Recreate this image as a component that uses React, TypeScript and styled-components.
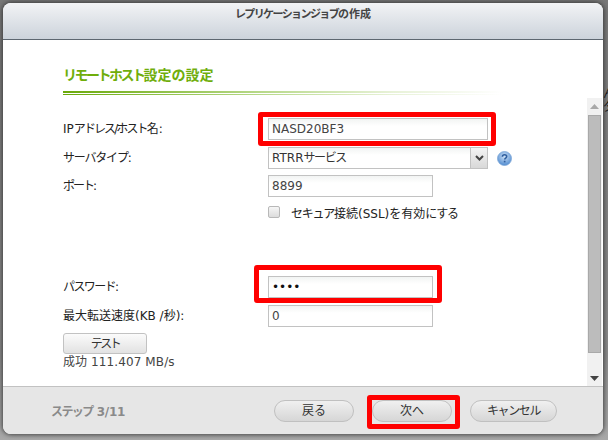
import React from "react";
import styled, { createGlobalStyle } from "styled-components";

const Global = createGlobalStyle`
  html, body { margin: 0; padding: 0; background: #7a7a7a; }
  * { box-sizing: border-box; }
`;

const font = `"DejaVu Sans", "Noto Sans CJK JP", sans-serif`;

const Page = styled.div`
  position: relative;
  width: 608px;
  height: 440px;
  overflow: hidden;
  padding: 3px 0 0 3px;
  font: 12px ${font};
  color: #222;
  background: linear-gradient(#777, #8a8a8a 80%, #a8a8a8);
`;

const BehindText = styled.div`
  position: absolute;
  left: 603px;
  top: 88px;
  font-size: 12px;
  line-height: 13px;
  color: #111;
  white-space: nowrap;
`;

const Kana = styled.span<{ $ls: number }>`
  letter-spacing: ${(p) => p.$ls}px;
`;

const Dialog = styled.div`
  position: relative;
  width: 600px;
  height: 431px;
  display: flex;
  flex-direction: column;
  border-radius: 8px;
  overflow: hidden;
  background: #fff;
  box-shadow: 0 0 4px 1px rgba(40, 40, 40, 0.75);
`;

const Header = styled.header`
  height: 37px;
  flex: none;
  display: flex;
  align-items: flex-start;
  justify-content: center;
  padding-top: 3px;
  background: linear-gradient(#f2f3f5, #ccd3db);
  border-bottom: 1px solid #5d6770;
  font-size: 11px;
  line-height: 18px;
  font-weight: 700;
  color: #444;
`;

const Body = styled.div`
  flex: 1;
  display: flex;
  min-height: 0;
  background: #fff;
`;

const Form = styled.div`
  flex: 1;
  padding: 27px 0 0 60px;
`;

const Title = styled.h2`
  margin: 0;
  height: 24px;
  font-size: 14px;
  line-height: 16px;
  font-weight: 700;
  color: #6fae0b;
`;

const Rule = styled.div`
  width: 440px;
  height: 4px;
  margin-bottom: 23px;
  background:
    linear-gradient(#fff, #fff) 0 2px / 100% 1px no-repeat,
    linear-gradient(90deg, #6aa90a, #b8d98a 45%, #e8f2d8 75%, #fff);
`;

const Row = styled.div<{ $gap?: number }>`
  display: flex;
  align-items: center;
  height: 22px;
  margin-top: ${(p) => p.$gap ?? 0}px;
`;

const Label = styled.label`
  width: 205px;
  flex: none;
  line-height: 16px;
`;

const TextBox = styled.div<{ $wide?: boolean; $dark?: boolean }>`
  width: ${(p) => (p.$wide ? 220 : 165)}px;
  height: 22px;
  padding-left: 3px;
  border: 1px solid #c2c2c2;
  background: linear-gradient(#f2f4f3, #fff 35%);
  line-height: 20px;
  color: ${(p) => (p.$dark ? "#111" : "#444")};
`;

const SelectBox = styled.div`
  width: 220px;
  height: 22px;
  display: flex;
  border: 1px solid #c2c2c2;
  background: linear-gradient(#f2f4f3, #fff 35%);
  line-height: 20px;
  color: #333;
`;

const SelectText = styled.span`
  flex: 1;
  padding-left: 3px;
`;

const SelectArrow = styled.span`
  width: 17px;
  display: flex;
  align-items: center;
  justify-content: center;
  border-left: 1px solid #c2c2c2;
  background: linear-gradient(#f4f4f4, #d8d8d8);
`;

const HelpWrap = styled.span`
  display: flex;
  margin-left: 9px;
`;

const CheckRow = styled.div`
  display: flex;
  align-items: center;
  height: 16px;
  margin: 7px 0 0 205px;
`;

const CheckBox = styled.span`
  width: 12px;
  height: 12px;
  flex: none;
  margin-right: 11px;
  border: 1px solid #b8b8b8;
  border-radius: 2px;
  background: linear-gradient(#f6f6f6, #dcdcdc);
`;

const TestButton = styled.div`
  width: 84px;
  height: 21px;
  margin-top: 6px;
  border: 1px solid #c2c2c2;
  border-radius: 3px;
  background: linear-gradient(#fbfbfb, #e2e2e2);
  text-align: center;
  line-height: 20px;
  color: #333;
`;

const Result = styled.div`
  line-height: 17px;
  color: #444;
  letter-spacing: 0.1px;
`;

const Scrollbar = styled.div`
  width: 15px;
  flex: none;
  margin: 58px 1px 0 0;
  padding: 0 1px;
  display: flex;
  flex-direction: column;
  align-items: stretch;
  background: #f1f1f1;
`;

const ScrollArrow = styled.div<{ $h: number }>`
  height: ${(p) => p.$h}px;
  display: flex;
  align-items: center;
  justify-content: center;
`;

const ScrollThumb = styled.div`
  height: 238px;
  background: #bcbcbc;
  border: 1px solid #a9a9a9;
`;

const ScrollSpacer = styled.div`
  flex: 1;
`;

const Footer = styled.footer`
  height: 48px;
  flex: none;
  display: flex;
  align-items: center;
  padding: 0 46px 0 48px;
  border-top: 1px solid #c2c2c2;
  background: #e6e6e6;
`;

const Step = styled.span`
  flex: 1;
  font-weight: 700;
  font-size: 12px;
  color: #8a8a8a;
`;

const Pill = styled.div<{ $w: number; $ml?: number }>`
  width: ${(p) => p.$w}px;
  height: 22px;
  margin-left: ${(p) => p.$ml ?? 0}px;
  border: 1px solid #c0c0c0;
  border-radius: 11px;
  background: linear-gradient(#f0f0f0, #d6d6d6);
  text-align: center;
  line-height: 20px;
  color: #333;
`;

const Highlight = styled.div<{ $x: number; $y: number; $w: number; $h: number }>`
  position: absolute;
  left: ${(p) => p.$x}px;
  top: ${(p) => p.$y}px;
  width: ${(p) => p.$w}px;
  height: ${(p) => p.$h}px;
  border: 5px solid #ff0000;
  border-radius: 3px;
`;

const Help = () => (
  <svg width="15" height="15" viewBox="0 0 15 15">
    <defs>
      <radialGradient id="h" cx="50%" cy="35%" r="65%">
        <stop offset="0" stopColor="#cfe2f6" />
        <stop offset="1" stopColor="#4f8ad0" />
      </radialGradient>
    </defs>
    <circle cx="7.5" cy="7.5" r="7" fill="url(#h)" stroke="#7fa8d8" strokeWidth="0.8" />
    <path d="M5.4 5.8c0-1.4 1-2 2.2-2s2.1.7 2.1 1.8c0 1.5-2 1.5-2 3" fill="none" stroke="#2f5f9f" strokeWidth="1.6" />
    <rect x="6.8" y="9.7" width="1.7" height="1.7" fill="#2f5f9f" />
  </svg>
);

const Chevron = () => (
  <svg width="9" height="6" viewBox="0 0 9 6">
    <path d="M1 1l3.5 3.5L8 1" fill="none" stroke="#444" strokeWidth="2" />
  </svg>
);

const Tri = ({ up, color }: { up?: boolean; color: string }) => (
  <svg width="9" height="5" viewBox="0 0 9 5">
    <path d={up ? "M4.5 0L9 5H0z" : "M0 0h9L4.5 5z"} fill={color} />
  </svg>
);

export default function App() {
  return (
    <Page>
      <Global />
      <BehindText>
        ん
        <br />
        ダ
      </BehindText>
      <Dialog>
        <Header>
          <span>
            <Kana $ls={-1.6}>レプリケーションジョブ</Kana>の作成
          </span>
        </Header>
        <Body>
          <Form>
            <Title>
              <Kana $ls={-2.5}>リモートホスト</Kana>設定の設定
            </Title>
            <Rule />
            <Row>
              <Label>
                IP<Kana $ls={-1.9}>アドレス/ホスト</Kana>名:
              </Label>
              <TextBox $wide>NASD20BF3</TextBox>
            </Row>
            <Row $gap={7}>
              <Label>
                <Kana $ls={-1.2}>サーバタイプ</Kana>:
              </Label>
              <SelectBox>
                <SelectText>
                  RTRR<Kana $ls={-1.4}>サービス</Kana>
                </SelectText>
                <SelectArrow>
                  <Chevron />
                </SelectArrow>
              </SelectBox>
              <HelpWrap>
                <Help />
              </HelpWrap>
            </Row>
            <Row $gap={6}>
              <Label>
                <Kana $ls={-2}>ポート</Kana>:
              </Label>
              <TextBox>8899</TextBox>
            </Row>
            <CheckRow>
              <CheckBox />
              <span>
                <Kana $ls={-1.2}>セキュア</Kana>接続(SSL)を有効<Kana $ls={-1.2}>にする</Kana>
              </span>
            </CheckRow>
            <Row $gap={56}>
              <Label>
                <Kana $ls={-1.6}>パスワード</Kana>:
              </Label>
              <TextBox $dark>••••</TextBox>
            </Row>
            <Row $gap={7}>
              <Label>最大転送速度(KB /秒):</Label>
              <TextBox>0</TextBox>
            </Row>
            <TestButton>
              <Kana $ls={-2.5}>テスト</Kana>
            </TestButton>
            <Result>成功 111.407 MB/s</Result>
          </Form>
          <Scrollbar>
            <ScrollArrow $h={17}>
              <Tri up color="#a8a8a8" />
            </ScrollArrow>
            <ScrollThumb />
            <ScrollSpacer />
            <ScrollArrow $h={16}>
              <Tri color="#444" />
            </ScrollArrow>
          </Scrollbar>
        </Body>
        <Footer>
          <Step>
            <Kana $ls={-1.6}>ステップ</Kana> <Kana $ls={-0.3}>3/11</Kana>
          </Step>
          <Pill $w={80}>戻る</Pill>
          <Pill $w={80} $ml={18}>次へ</Pill>
          <Pill $w={87} $ml={18}>
            <Kana $ls={-1.4}>キャンセル</Kana>
          </Pill>
        </Footer>
      </Dialog>
      <Highlight $x={258} $y={112} $w={238} $h={34} />
      <Highlight $x={254} $y={265} $w={188} $h={38} />
      <Highlight $x={367} $y={395} $w={93} $h={34} />
    </Page>
  );
}
